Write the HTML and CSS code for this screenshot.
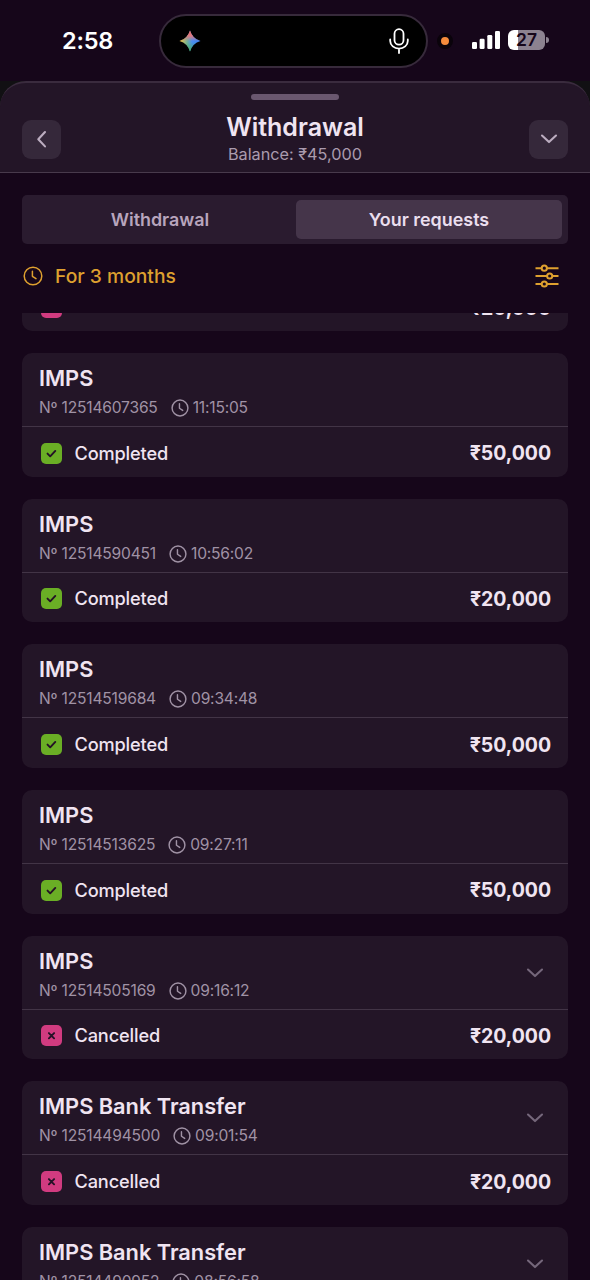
FILE: index.html
```
<!DOCTYPE html>
<html lang="en">
<head>
<meta charset="utf-8">
<title>Withdrawal</title>
<link rel="stylesheet" href="styles.css">
</head>
<body>
<svg class="defs" width="0" height="0" aria-hidden="true">
  <symbol id="clock" viewBox="0 0 20 20"><circle cx="10" cy="10" r="8.8"/><path d="M9.400 5.200v5.100l3.600 2.400"/></symbol>
  <symbol id="down" viewBox="0 0 20 12"><path d="M3 2.500L10 9.100l7-6.600"/></symbol>
  <symbol id="check" viewBox="0 0 21 21"><path d="M6.500 10.600l2.700 2.700 5.100-5.400"/></symbol>
  <symbol id="cross" viewBox="0 0 21 21"><path d="M7.900 8.100l5.200 5.200M13.100 8.100l-5.200 5.200"/></symbol>
</svg>
<div class="screen">
  <div class="status">
    <span class="time">2:58</span>
    <div class="island">
      <svg class="spark" width="22" height="22" viewBox="0 0 22 22">
        <defs>
          <linearGradient id="sg" x1="0" y1="0" x2="1" y2="0"><stop offset="0.05" stop-color="#e8c34a"/><stop offset="0.38" stop-color="#6fae9c"/><stop offset="0.6" stop-color="#4a8df0"/><stop offset="1" stop-color="#3f7ff0"/></linearGradient>
          <linearGradient id="sr" x1="0" y1="0" x2="0" y2="1"><stop offset="0" stop-color="#ec5f66"/><stop offset="0.25" stop-color="#e07a80"/><stop offset="0.5" stop-color="#e07a80" stop-opacity="0"/></linearGradient>
          <linearGradient id="sb" x1="0" y1="0" x2="0" y2="1"><stop offset="0.55" stop-color="#3fae6a" stop-opacity="0"/><stop offset="1" stop-color="#3fae5a"/></linearGradient>
        </defs>
        <path fill="url(#sg)" d="M11 .5Q13.400 8.600 21.500 11 13.400 13.400 11 21.500 8.600 13.400.5 11 8.600 8.600 11 .5z"/>
        <path fill="url(#sr)" d="M11 .5Q13.400 8.600 21.500 11 13.400 13.400 11 21.500 8.600 13.400.5 11 8.600 8.600 11 .5z"/>
        <path fill="url(#sb)" d="M11 .5Q13.400 8.600 21.500 11 13.400 13.400 11 21.500 8.600 13.400.5 11 8.600 8.600 11 .5z"/>
      </svg>
      <svg class="mic" width="20" height="26" viewBox="0 0 20 26"><rect x="5.500" y="1.200" width="9" height="15.500" rx="4.500"/><path d="M1.200 11.500v1.500a8.800 7.600 0 0 0 17.600 0v-1.500M10 20.600V25"/></svg>
    </div>
    <span class="dot"></span>
    <svg class="signal" width="28" height="18" viewBox="0 0 28 18"><rect x="0" y="11" width="5" height="7" rx="1.300"/><rect x="7.600" y="7.800" width="5" height="10.200" rx="1.300"/><rect x="15.300" y="4" width="5" height="14" rx="1.300"/><rect x="23" y="0" width="5" height="18" rx="1.300"/></svg>
    <div class="battery">27</div><span class="nub"></span>
  </div>
  <div class="sheet-back">
    <header class="header">
      <div class="grip"></div>
      <div class="head-row">
        <button class="sq"><svg width="12" height="18" viewBox="0 0 12 18"><path d="M9 2L2.300 9.200 9 16.400"/></svg></button>
        <div class="titles"><h1>Withdrawal</h1><p>Balance: ₹45,000</p></div>
        <button class="sq"><svg width="20" height="12"><use href="#down"/></svg></button>
      </div>
    </header>
  </div>
  <div class="tabs"><span class="tab">Withdrawal</span><span class="tab active">Your requests</span></div>
  <div class="filter">
    <svg class="fclock" width="20" height="20"><use href="#clock"/></svg>
    <span>For 3 months</span>
    <svg class="sliders" width="24" height="24" viewBox="0 0 24 24"><path d="M.5 4.200h6M12 4.200h11.500M.5 12h11.500M17.500 12h6M.5 20h6M12 20h11.500"/><circle cx="9.300" cy="4.200" r="2.600"/><circle cx="14.700" cy="12" r="2.600"/><circle cx="9.300" cy="20" r="2.600"/></svg>
  </div>
  <main class="list">
    <div class="cards" id="cards"></div>
  </main>
</div>
<script src="cards.js"></script>
</body>
</html>
```

FILE: cards.js
```
const rows = [
  ["", "", "", false, "20,000"],
  ["IMPS", "12514607365", "11:15:05", true, "50,000"],
  ["IMPS", "12514590451", "10:56:02", true, "20,000"],
  ["IMPS", "12514519684", "09:34:48", true, "50,000"],
  ["IMPS", "12514513625", "09:27:11", true, "50,000"],
  ["IMPS", "12514505169", "09:16:12", false, "20,000"],
  ["IMPS Bank Transfer", "12514494500", "09:01:54", false, "20,000"],
  ["IMPS Bank Transfer", "12514490952", "08:56:58", false, "20,000"]
];
document.getElementById("cards").innerHTML = rows.map(([name, no, time, done, sum]) => `
  <article class="card">
    <div class="top">${name ? `
      <div class="info">
        <h2>${name}</h2>
        <div class="meta"><span>Nº ${no}</span><svg width="18" height="18"><use href="#clock"/></svg><span>${time}</span></div>
      </div>` : ""}
      ${done ? "" : '<svg class="more" width="20" height="12"><use href="#down"/></svg>'}
    </div>
    <div class="bottom">
      <span class="badge ${done ? "ok" : "no"}"><svg width="21" height="21"><use href="#${done ? "check" : "cross"}"/></svg></span>
      <span class="state">${done ? "Completed" : "Cancelled"}</span>
      <span class="sum">₹${sum}</span>
    </div>
  </article>`).join("");
```

FILE: styles.css
```
* { box-sizing: border-box; }
body { margin: 0; background: #16061a; font-family: Inter, "Noto Sans", sans-serif; color: #f0e4f1; }
h1, h2, p { margin: 0; }
svg { display: block; flex: none; fill: none; stroke: currentColor; stroke-linecap: round; stroke-linejoin: round; }
.defs { position: absolute; }
.screen { width: 590px; height: 1280px; overflow: hidden; display: flex; flex-direction: column; }

.status { height: 81px; flex: none; display: flex; align-items: center; color: #fff; }
.time { width: 159px; padding-left: 62px; font-size: 23.500px; font-weight: 600; letter-spacing: -0.2px; }
.island { width: 269px; height: 54px; border: 2px solid #372a3b; border-radius: 27px; background: #000; display: flex; align-items: center; justify-content: space-between; padding: 0 17px 0 18px; }
.spark { stroke: none; }
.mic { stroke-width: 1.800; }
.dot { width: 16px; height: 16px; margin-left: 9px; border-radius: 50%; border: 4px solid #0a030b; background: #f58b3c; }
.signal { margin-left: 19px; margin-top: -2px; fill: #fff; stroke: none; }
.battery { width: 37px; height: 20px; margin-left: 8px; margin-top: -1px; border-radius: 6px; background: linear-gradient(90deg, #fff 10px, #8c8290 10px); color: #16061a; font-size: 17.500px; font-weight: 600; line-height: 20px; text-align: center; }
.nub { width: 3px; height: 6px; margin-left: 1px; margin-top: -1px; border-radius: 0 3px 3px 0; background: #8c8290; }

.sheet-back { height: 92px; flex: none; background: #111013; }
.header { height: 92px; background: #231527; border-top: 2px solid #3a2b3e; border-bottom: 1px solid #483a4c; border-radius: 26px 26px 0 0; padding: 11px 22px 0; }
.grip { width: 88px; height: 6px; margin: 0 auto; border-radius: 3px; background: #6a576f; }
.head-row { display: flex; align-items: center; justify-content: space-between; padding-top: 10px; }
.sq { width: 39px; height: 39px; margin-top: 2px; padding: 0; border: 0; border-radius: 9px; background: #35283a; color: #bcadc0; display: flex; align-items: center; justify-content: center; stroke-width: 2.100; }
.titles { text-align: center; }
.titles h1 { font-size: 25px; line-height: 34px; font-weight: 600; }
.titles p { font-size: 16.250px; line-height: 20px; padding-bottom: 2px; color: #aa9bae; }

.tabs { flex: none; height: 49px; margin: 22px 22px 0; padding: 5px 6px 5px 5px; border-radius: 5px; background: #2a1b2f; display: flex; gap: 3px; }
.tab { flex: 1; display: flex; align-items: center; justify-content: center; border-radius: 5px; font-size: 17.900px; font-weight: 600; color: #b8a5bd; }
.active { background: #45354a; color: #eadeee; }
.filter { flex: none; height: 69px; padding: 0 31px 5px 23px; display: flex; align-items: center; color: #dea02f; font-size: 19.250px; font-weight: 500; }
.fclock { stroke-width: 1.500; margin-right: 12px; }
.sliders { margin-left: auto; stroke-width: 2; stroke-linecap: butt; }

.list { flex: 1; min-height: 0; overflow: hidden; }
.cards { display: flex; flex-direction: column; gap: 22px; padding: 0 22px; margin-top: -105.650px; }
.card { flex: none; height: 123.650px; border-radius: 10px; background: #231527; }
.top { height: 74px; padding: 10px 23px 0 17px; border-bottom: 1px solid #423446; display: flex; justify-content: space-between; }
.info h2 { font-size: 21.800px; line-height: 30px; font-weight: 600; letter-spacing: -0.020px; white-space: nowrap; }
.meta { display: flex; align-items: center; line-height: 20px; margin-top: 5px; font-size: 15.600px; letter-spacing: -0.200px; color: #a092a5; }
.meta svg { margin: 0 4px 0 13px; stroke-width: 1.600; }
.more { margin-top: 21px; color: #75677b; stroke-width: 2.100; }
.bottom { height: 49.650px; padding: 2px 17px 0 18.500px; display: flex; align-items: center; }
.badge { width: 21px; height: 21px; margin-top: 1px; border-radius: 5px; color: #241126; stroke-width: 1.900; }
.ok { background: #6aae25; }
.no { background: #d13b80; }
.state { margin-left: 13px; font-size: 18.200px; font-weight: 500; letter-spacing: -0.150px; }
.sum { margin-left: auto; margin-top: 1px; font-size: 19.500px; font-weight: 650; letter-spacing: -0.050px; }
/* The status label of the row leaving the scroll area is faded out. */
.card:first-child .state { color: #34253a; padding-bottom: 5px; }
```
